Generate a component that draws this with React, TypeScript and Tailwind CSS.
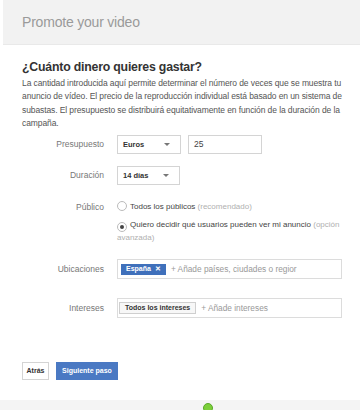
import { useState } from 'react';

function Caret() {
  return (
    <svg width="6" height="3" viewBox="0 0 6 3" className="fill-[#777]">
      <path d="M0 0h6L3 3z" />
    </svg>
  );
}

type RowProps = { label: string; children: React.ReactNode; className?: string; top?: boolean };

function Row({ label, children, className = '', top = false }: RowProps) {
  return (
    <div className={`flex gap-[13px] ${top ? 'items-start' : 'items-center'} ${className}`}>
      <div className={`w-[104px] shrink-0 text-right text-[8.5px] text-[#777] ${top ? 'leading-[12px]' : ''}`}>{label}</div>
      <div className="flex-1">{children}</div>
    </div>
  );
}

function Radio({ checked }: { checked: boolean }) {
  return (
    <span className="inline-flex align-[-2px] mr-[3px] w-[10px] h-[10px] rounded-full border border-[#bbb] bg-white items-center justify-center">
      {checked && <span className="w-[4px] h-[4px] rounded-full bg-[#444]" />}
    </span>
  );
}

export default function App() {
  const [audience, setAudience] = useState<'all' | 'custom'>('custom');

  return (
    <div className="w-[360px] h-[410px] bg-white flex flex-col font-['Liberation_Sans',Arial,sans-serif] overflow-hidden">
      {/* Header */}
      <div className="h-[45px] shrink-0 bg-[#f2f2f2] border-b border-[#e9e9e9] ml-[3px] pl-[19px] flex items-center">
        <h1 className="text-[14px] tracking-[-0.2px] text-[#9a9a9a] leading-none">Promote your video</h1>
      </div>

      <div className="flex-1 pt-[15px]">
        <div className="pl-[22px] pr-[18px]">
          <h2 className="text-[12.3px] tracking-[-0.2px] font-bold text-[#333] leading-[15px]">¿Cuánto dinero quieres gastar?</h2>
          <p className="mt-[2px] text-[8.5px] tracking-[-0.1px] leading-[13.3px] text-[#555]">
            La cantidad introducida aquí permite determinar el número de veces que se muestra tu anuncio de vídeo. El
            precio de la reproducción individual está basado en un sistema de subastas. El presupuesto se distribuirá
            equitativamente en función de la duración de la campaña.
          </p>
        </div>

        <Row label="Presupuesto" className="mt-[5px]">
          <div className="flex gap-[7px]">
            <div className="w-[64px] h-[19px] border border-[#d4d4d4] bg-white flex items-center justify-between pl-[5px] pr-[10px] text-[7.5px] font-bold text-[#333]">
              Euros <Caret />
            </div>
            <div className="w-[74px] h-[19px] border border-[#d4d4d4] bg-white flex items-center pl-[5px] text-[8.5px] text-[#444]">
              25
            </div>
          </div>
        </Row>

        <Row label="Duración" className="mt-[12px]">
          <div className="w-[63px] h-[19px] border border-[#d4d4d4] bg-white flex items-center justify-between pl-[5px] pr-[10px] text-[7.5px] font-bold text-[#333]">
            14 días <Caret />
          </div>
        </Row>

        <Row label="Público" top className="mt-[16px]">
          <div className="pr-[14px] text-[8px] text-[#444] leading-[12.5px]">
            <div className="cursor-pointer" onClick={() => setAudience('all')}>
              <Radio checked={audience === 'all'} />
              Todos los públicos <span className="text-[#b0b0b0]">(recomendado)</span>
            </div>
            <div className="mt-[5px] cursor-pointer" onClick={() => setAudience('custom')}>
              <Radio checked={audience === 'custom'} />
              Quiero decidir qué usuarios pueden ver mi anuncio <span className="text-[#b0b0b0]">(opción avanzada)</span>
            </div>
          </div>
        </Row>

        <Row label="Ubicaciones" className="mt-[15px]">
          <div className="w-[225px] h-[20px] border border-[#dcdcdc] bg-white flex items-center pl-[3px] gap-[5px] text-[8.3px] overflow-hidden whitespace-nowrap">
            <span className="h-[11px] px-[5px] bg-[#3f70bb] text-white text-[7px] font-bold flex items-center gap-[4px]">
              España <span className="text-[7px]">✕</span>
            </span>
            <span className="text-[#999]">+ Añade países, ciudades o regior</span>
          </div>
        </Row>

        <Row label="Intereses" className="mt-[19px]">
          <div className="w-[225px] h-[20px] border border-[#dcdcdc] bg-white flex items-center pl-[1px] gap-[5px] text-[8.3px] whitespace-nowrap">
            <span className="h-[12px] px-[5px] bg-[#f7f7f7] border border-[#cfcfcf] text-[#333] text-[7px] font-bold flex items-center">
              Todos los intereses
            </span>
            <span className="text-[#999]">+ Añade intereses</span>
          </div>
        </Row>

        <div className="mt-[44px] pl-[22px] flex gap-[7px]">
          <button className="h-[18px] w-[27px] border border-[#d4d4d4] bg-white text-[7px] font-bold text-[#333]">Atrás</button>
          <button className="h-[18px] w-[62px] bg-[#4a79c3] text-[7px] font-bold text-white">Siguiente paso</button>
        </div>
      </div>

      {/* Footer */}
      <div className="h-[10px] shrink-0 bg-[#f4f4f4] flex justify-center">
        <span className="ml-[56px] mt-[3px] w-[10px] h-[10px] rounded-full bg-[#7ccf3a] border border-[#5aa82a]" />
      </div>
    </div>
  );
}
